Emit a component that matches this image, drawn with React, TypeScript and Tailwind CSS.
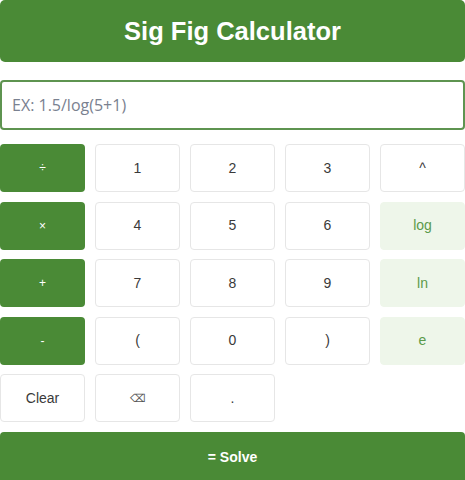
import React, { useState } from 'react';

type Kind = 'op' | 'num' | 'fn';

const keys: { label: string; kind: Kind }[] = [
  { label: '÷', kind: 'op' },
  { label: '1', kind: 'num' },
  { label: '2', kind: 'num' },
  { label: '3', kind: 'num' },
  { label: '^', kind: 'num' },
  { label: '×', kind: 'op' },
  { label: '4', kind: 'num' },
  { label: '5', kind: 'num' },
  { label: '6', kind: 'num' },
  { label: 'log', kind: 'fn' },
  { label: '+', kind: 'op' },
  { label: '7', kind: 'num' },
  { label: '8', kind: 'num' },
  { label: '9', kind: 'num' },
  { label: 'ln', kind: 'fn' },
  { label: '-', kind: 'op' },
  { label: '(', kind: 'num' },
  { label: '0', kind: 'num' },
  { label: ')', kind: 'num' },
  { label: 'e', kind: 'fn' },
  { label: 'Clear', kind: 'num' },
  { label: '⌫', kind: 'num' },
  { label: '.', kind: 'num' },
];

const styles: Record<Kind, string> = {
  op: 'bg-[#4a8a36] text-white text-[12px] border-transparent',
  num: 'bg-white text-[#3a3a3a] text-[14px] border-[#e6e6e6]',
  fn: 'bg-[#eef6ea] text-[#5b9a4a] text-[14px] border-[#eef6ea]',
};

export default function App() {
  const [expr, setExpr] = useState('');

  return (
    <div className="w-[465px] h-[480px] overflow-hidden bg-white font-['Liberation_Sans',Arial,sans-serif]">
      <header className="h-[62px] bg-[#4a8a36] rounded-[5px] flex items-center justify-center">
        <h1 className="text-white text-[25.5px] font-bold">Sig Fig Calculator</h1>
      </header>

      <input
        value={expr}
        onChange={(e) => setExpr(e.target.value)}
        placeholder="EX: 1.5/log(5+1)"
        className="mt-[18px] block w-full h-[50px] px-[10px] border-2 border-[#5e9450] rounded-[4px] text-[16px] font-['Open_Sans',sans-serif] text-[#333] placeholder:text-[#7a8190] outline-none"
      />

      <div className="mt-[14px] grid grid-cols-5 gap-x-[10px] gap-y-[9.5px]">
        {keys.map((k) => (
          <button
            key={k.label}
            onClick={() => setExpr(expr + k.label)}
            className={`h-[48px] rounded-[4px] border flex items-center justify-center ${styles[k.kind]}`}
          >
            {k.label === '⌫' ? <span className="text-[11px] text-[#555]">⌫</span> : k.label}
          </button>
        ))}
      </div>

      <button className="mt-[10px] w-full h-[56px] bg-[#4a8a36] rounded-[4px] text-white text-[14px] font-bold flex items-start justify-center pt-[15px]">
        = Solve
      </button>
    </div>
  );
}
